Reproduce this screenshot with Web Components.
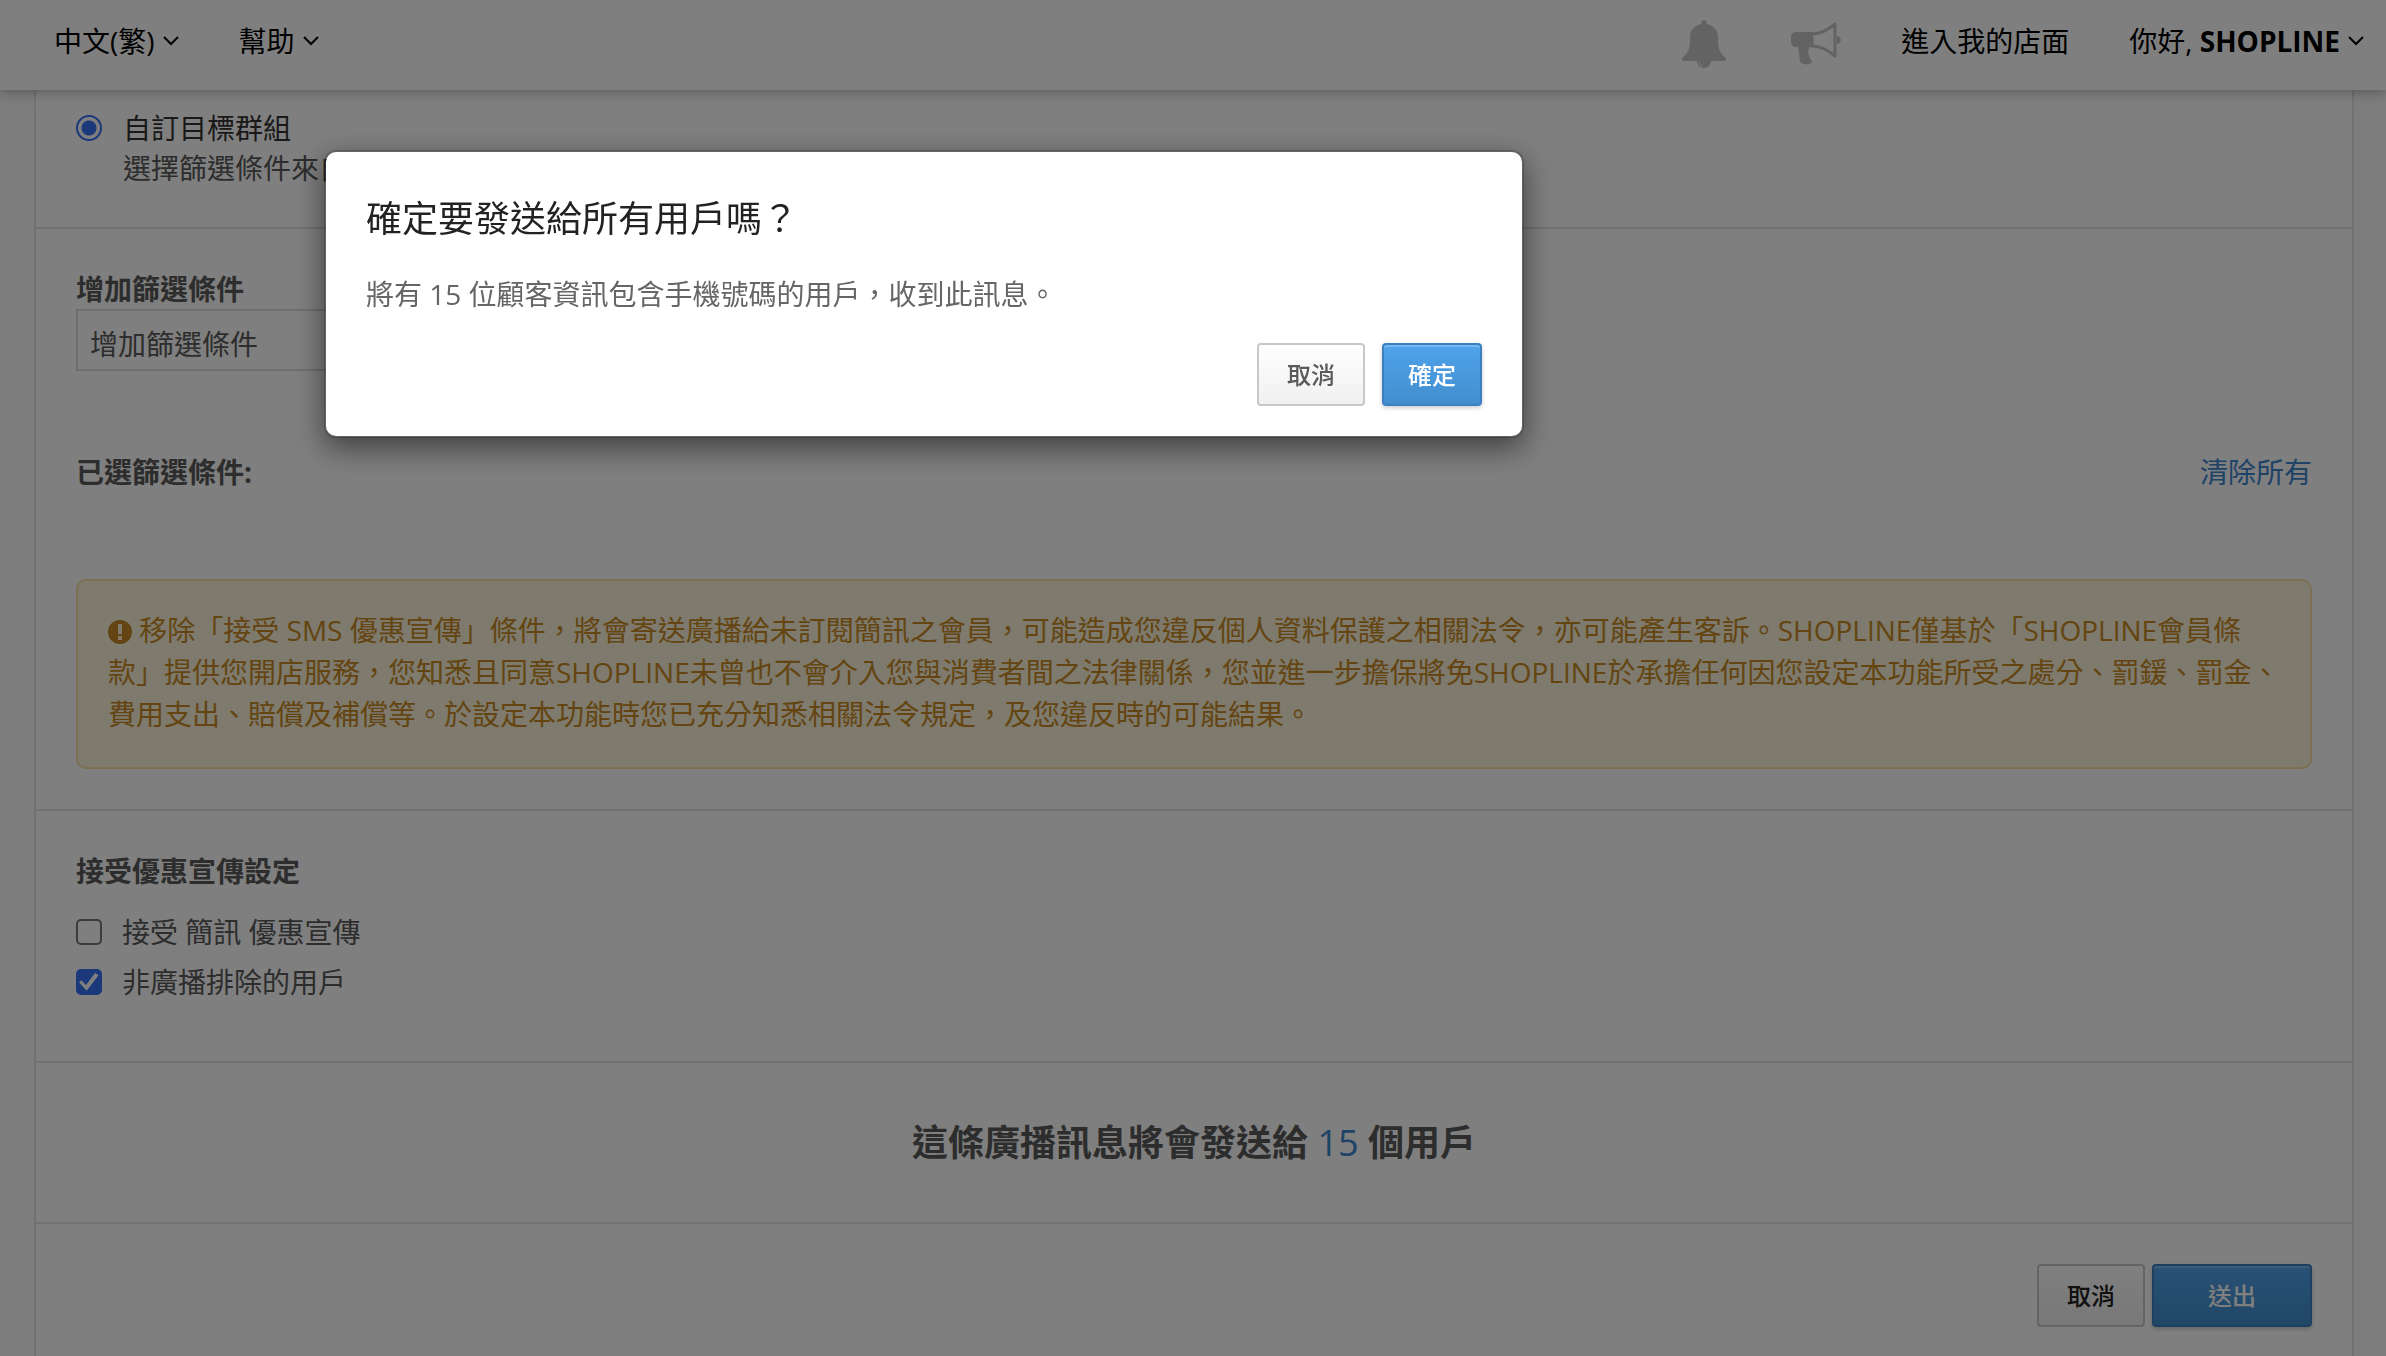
<!DOCTYPE html>
<html lang="zh-Hant">
<head>
<meta charset="utf-8">
<title>SHOPLINE</title>
<style>
html { height: 100%; }
body { margin: 0; min-height: 100%; background: #fafafa; font-family: "Open Sans", "Noto Sans CJK TC", sans-serif; font-size: 28px; line-height: 40px; color: #5a5a5a; overflow: hidden; }
</style>
</head>
<body>
<broadcast-page></broadcast-page>
<script>
const define = (name, html) => {
  const template = document.createElement('template');
  template.innerHTML = html;
  customElements.define(name, class extends HTMLElement {
    constructor() {
      super();
      this.attachShadow({ mode: 'open' }).append(template.content.cloneNode(true));
    }
  });
};

define('menu-link', `
<style>
:host { display: block; }
a { display: flex; align-items: center; gap: 8px; color: #000; text-decoration: none; white-space: nowrap; }
svg { display: none; }
:host([drop]) svg { display: block; }
</style>
<a href="#"><span><slot></slot></span><svg width="16" height="12" viewBox="0 0 16 12" fill="none" stroke="#000" stroke-width="2"><path d="M1 2l7 7 7-7"/></svg></a>`);

define('top-bar', `
<style>
:host { display: block; position: relative; z-index: 1; background: #fff; box-shadow: 0 2px 12px rgba(0,0,0,.3); }
header { display: flex; align-items: center; height: 82px; padding: 0 22px 8px 54px; }
nav { display: flex; align-items: center; gap: 60px; }
.end { margin-left: auto; }
.icons { display: flex; align-items: center; gap: 64px; }
button { display: block; border: 0; padding: 0; background: none; height: 50px; margin-top: 6px; }
svg { display: block; }
b { font-weight: 700; }
</style>
<header>
  <nav><menu-link drop>中文(繁)</menu-link><menu-link drop>幫助</menu-link></nav>
  <nav class="end">
    <div class="icons">
      <button aria-label="notifications"><svg width="46" height="50" viewBox="0 0 46 50" fill="#c6c6c6"><path d="M23 1c2 0 3 1 3 4 7 2 11 6 11 13 0 13 2 16 7 20 2 2 1 4-1 4H3c-2 0-3-2-1-4 5-4 7-7 7-20C9 11 13 7 20 5c0-3 1-4 3-4z"/><path d="M16 42c0 4 3 7 7 7s7-3 7-7z"/><path d="M18 43c0 2 2 4 4 4" fill="none" stroke="#fff" stroke-width="1"/></svg></button>
      <button aria-label="announcements"><svg width="50" height="44" viewBox="0 0 50 44"><path d="M5 10h17v15h-3c-3 4-2 9 2 14 1 4-11 5-12 0L7 25H5c-3 0-5-2-5-5v-5c0-3 2-5 5-5z" fill="#c6c6c6"/><path d="M21 12c9 0 16-4 23-10v32c-7-6-14-10-23-10z" fill="none" stroke="#c6c6c6" stroke-width="3" stroke-linejoin="round"/><path d="M46 14c5 1 5 7 0 8z" fill="#c6c6c6"/></svg></button>
    </div>
    <menu-link>進入我的店面</menu-link>
    <menu-link drop>你好, <b>SHOPLINE</b></menu-link>
  </nav>
</header>`);

define('panel-section', `
<style>
:host { display: block; padding: var(--pad, 40px); border-bottom: 2px solid #e5e5e5; }
:host([last]) { border-bottom: 0; }
</style><slot></slot>`);

define('ui-button', `
<style>
:host { display: block; }
button { box-sizing: border-box; display: block; min-width: var(--w, 108px); height: 63px; padding: 0 24px; font: inherit; font-size: 24px; font-weight: 500; line-height: 32px; border: 2px solid #c8c8c8; border-radius: 4px; color: var(--ink, #5a5a5a); background: linear-gradient(#fff, #f0f0f0); }
:host([primary]) button { color: #fff; border-color: #3c80c0; background: linear-gradient(#4fa3ec, #428ecd); box-shadow: inset 0 2px 1px rgba(255,255,255,.25), 0 2px 4px rgba(0,0,0,.2); }
</style>
<button><slot></slot></button>`);

define('target-group', `
<style>
:host { display: block; }
label { display: flex; align-items: flex-start; gap: 21px; color: #333; }
input { flex: none; width: 26px; height: 26px; margin: 7px 0 0; }
small { display: block; font-size: 28px; color: #5a5a5a; }
input { appearance: none; border: 2px solid #3570f4; border-radius: 50%; background: radial-gradient(circle, #3570f4 7px, #fff 8px); }
</style>
<label><input type="radio" checked><span>自訂目標群組<small>選擇篩選條件來自訂您的目標群組</small></span></label>`);

define('filter-form', `
<style>
:host { display: block; }
label { display: block; font-weight: 700; }
select { display: block; box-sizing: border-box; width: 50%; height: 62px; appearance: none; border: 2px solid #dcdcdc; border-radius: 0; padding: 7px 12px 0; background: #fff; color: #5a5a5a; font: inherit; }
.row { display: flex; justify-content: space-between; margin: 81px 0 87px; font-weight: 700; }
a { color: #3c86cc; font-weight: 400; text-decoration: none; }
</style>
<label for="f">增加篩選條件</label>
<select id="f"><option>增加篩選條件</option></select>
<div class="row"><span>已選篩選條件:</span><a href="#">清除所有</a></div>`);

define('warn-note', `
<style>
:host { display: block; box-sizing: border-box; padding: 28px 30px 32px; border: 2px solid #fadfa5; border-radius: 10px; background: #fcf5da; color: #c88a25; line-height: 42px; }
p { margin: 0; }
svg { vertical-align: -3px; }
</style>
<p><svg width="24" height="24" viewBox="0 0 24 24"><circle cx="12" cy="12" r="12" fill="#c88a25"/><path d="M10 4h4v10h-4zM10 16h4v4h-4z" fill="#fcf5da"/></svg> <slot></slot></p>`);

define('tick-row', `
<style>
:host { display: block; }
label { display: flex; align-items: center; gap: 20px; line-height: 50px; }
input { appearance: none; display: grid; place-items: center; box-sizing: border-box; width: 26px; height: 26px; margin: 0; border: 2px solid #767676; border-radius: 5px; background: #fff; }
input:checked { border-color: #3570f4; background: #3570f4; }
input:checked::before { content: ""; width: 20px; height: 18px; background: #fff; clip-path: polygon(0 52%, 12% 40%, 35% 66%, 80% 0, 98% 12%, 38% 98%); }
</style>
<label><input type="checkbox"><span><slot></slot></span></label>`);
customElements.define('tick-item', class extends customElements.get('tick-row') {
  connectedCallback() { this.shadowRoot.querySelector('input').checked = this.hasAttribute('on'); }
});

define('audience-total', `
<style>
:host { display: block; text-align: center; font-size: 36px; line-height: 52px; font-weight: 700; }
span { color: #3c86cc; font-weight: 400; }
</style>這條廣播訊息將會發送給 <span>15</span> 個用戶`);

define('confirm-dialog', `
<style>
:host { position: fixed; inset: 0; z-index: 5; background: rgba(0,0,0,.5); }
section { position: absolute; left: 324px; top: 150px; box-sizing: border-box; width: 1200px; padding: 40px 40px 30px; border: 2px solid rgba(0,0,0,.2); border-radius: 12px; background: #fff; background-clip: padding-box; box-shadow: 0 10px 30px rgba(0,0,0,.5); }
h2 { margin: 0; font-size: 36px; line-height: 54px; font-weight: 400; color: #222; }
p { margin: 28px 0 29px; color: #666; }
footer { display: flex; justify-content: flex-end; gap: 17px; }
</style>
<section role="dialog" aria-labelledby="t">
  <h2 id="t">確定要發送給所有用戶嗎？</h2>
  <p>將有 15 位顧客資訊包含手機號碼的用戶，收到此訊息。</p>
  <footer><ui-button>取消</ui-button><ui-button primary style="--w:100px">確定</ui-button></footer>
</section>`);

define('broadcast-page', `
<style>
:host { display: flex; flex-direction: column; min-height: 100vh; }
main { flex: 1; margin: 0 32px 0 34px; background: #fff; border: solid #e5e5e5; border-width: 0 2px; }
h3 { margin: 0 0 16px; font: inherit; font-weight: 700; }
.actions { display: flex; justify-content: flex-end; gap: 7px; }
</style>
<top-bar></top-bar>
<main>
  <panel-section style="--pad:18px 40px 39px"><target-group></target-group></panel-section>
  <panel-section>
    <filter-form></filter-form>
    <warn-note>移除「接受 SMS 優惠宣傳」條件，將會寄送廣播給未訂閱簡訊之會員，可能造成您違反個人資料保護之相關法令，亦可能產生客訴。SHOPLINE僅基於「SHOPLINE會員條款」提供您開店服務，您知悉且同意SHOPLINE未曾也不會介入您與消費者間之法律關係，您並進一步擔保將免SHOPLINE於承擔任何因您設定本功能所受之處分、罰鍰、罰金、費用支出、賠償及補償等。於設定本功能時您已充分知悉相關法令規定，及您違反時的可能結果。</warn-note>
  </panel-section>
  <panel-section style="--pad:40px 40px 54px">
    <h3>接受優惠宣傳設定</h3>
    <tick-item>接受 簡訊 優惠宣傳</tick-item>
    <tick-item on>非廣播排除的用戶</tick-item>
  </panel-section>
  <panel-section style="--pad:54px 40px 53px"><audience-total></audience-total></panel-section>
  <panel-section last>
    <div class="actions"><ui-button style="--ink:#222">取消</ui-button><ui-button primary style="--w:160px">送出</ui-button></div>
  </panel-section>
</main>
<confirm-dialog></confirm-dialog>`);
</script>
</body>
</html>
